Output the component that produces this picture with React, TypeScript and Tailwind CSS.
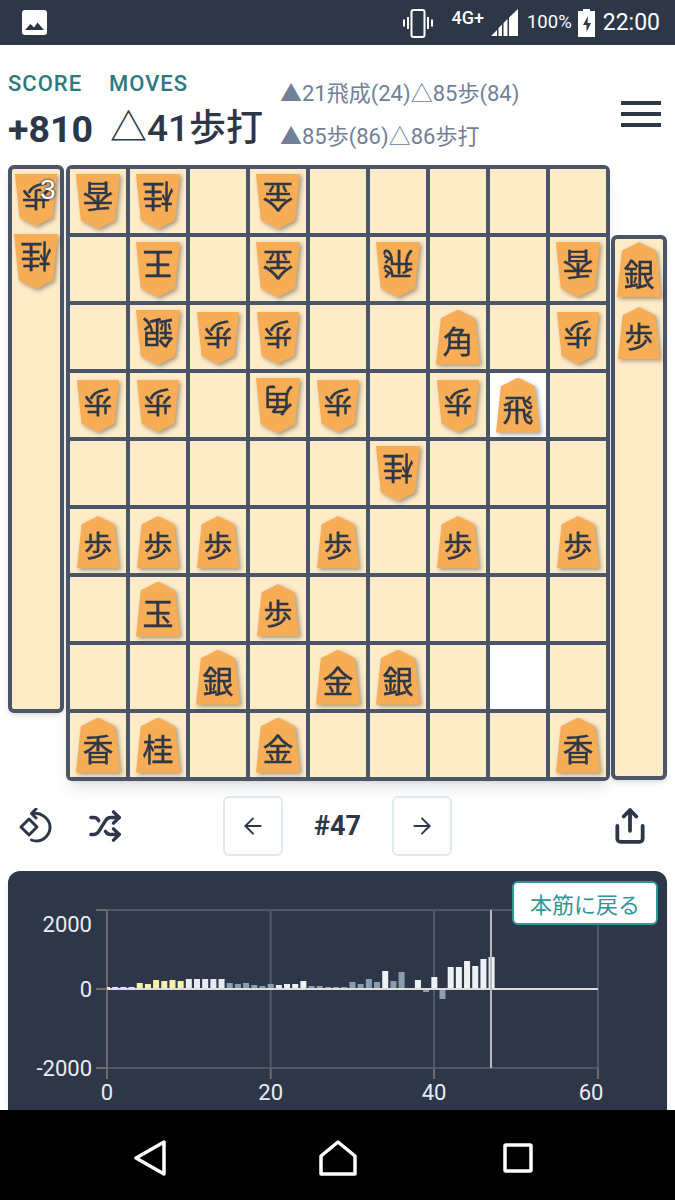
import { ArrowLeft, ArrowRight, Share, Shuffle } from "lucide-react"

type Cell = { k: string; opp?: boolean; hl?: boolean } | null

const o = (k: string): Cell => ({ k, opp: true })
const u = (k: string): Cell => ({ k })
const _ = null

const board: Cell[][] = [
  [o("香"), o("桂"), _, o("金"), _, _, _, _, _],
  [_, o("王"), _, o("金"), _, o("飛"), _, _, o("香")],
  [_, o("銀"), o("歩"), o("歩"), _, _, u("角"), _, o("歩")],
  [o("歩"), o("歩"), _, o("角"), o("歩"), _, o("歩"), { k: "飛", hl: true }, _],
  [_, _, _, _, _, o("桂"), _, _, _],
  [u("歩"), u("歩"), u("歩"), _, u("歩"), _, u("歩"), _, u("歩")],
  [_, u("玉"), _, u("歩"), _, _, _, _, _],
  [_, _, u("銀"), _, u("金"), u("銀"), _, { k: "", hl: true }, _],
  [u("香"), u("桂"), _, u("金"), _, _, _, _, u("香")],
]

// heights in px above the zero line, read off the graph
const bars = [
  2, 2, 2, 2, 6, 5, 9, 8, 9, 8, 10, 10, 10, 10, 10, 6, 5, 6, 4, 3, 5, 4, 5, 5, 8, 3, 3, 2, 2, 2, 7, 5, 10, 7, 18, 8,
  17, 1, 9, -3, 12, -10, 22, 22, 28, 23, 30, 32,
]

function barColor(i: number, h: number) {
  if (i < 10) return "#f8f3a6"
  if (h < 0) return "#8e9cb1"
  if (i < 15) return "#e6ebf1"
  if ((i >= 15 && i < 21) || (i >= 25 && i < 34) || i === 35 || i === 36 || i === 37) return "#8e9cb1"
  return "#edf2f7"
}

function Piece({ k, opp }: { k: string; opp?: boolean }) {
  const small = k === "歩"
  return (
    <div className={`drop-shadow-[2px_2px_2px_rgba(0,0,0,0.35)] ${small ? "mt-[2px]" : ""}`}>
      <div
        className={`flex items-center justify-center bg-[#f6ad55] text-[#2d3748] [clip-path:polygon(50%_0,89%_16%,100%_100%,0_100%,11%_16%)] ${
          small ? "h-[52px] w-[42px] text-[29px]" : "h-[55px] w-[44px] text-[31px]"
        } ${opp ? "rotate-180" : ""}`}
      >
        <span className="leading-none pt-[5px] [-webkit-text-stroke:0.4px_#2d3748]">{k}</span>
      </div>
    </div>
  )
}

function StatusBar() {
  return (
    <div className="flex h-[45px] items-center justify-between bg-[#2d3748] pl-[21px] pr-[15px] text-white font-['Roboto',sans-serif]">
      <svg width="26" height="26" viewBox="0 0 26 26">
        <rect x="1" y="0" width="25" height="25" rx="3" fill="#fff" />
        <path d="M4 20l5.500-6 3.500 3.500 3.500-5 6.500 7.500z" fill="#2d3748" />
      </svg>
      <div className="flex items-center">
        <svg width="30" height="30" viewBox="0 0 30 30" fill="none" stroke="#fff" strokeWidth="2">
          <rect x="8.500" y="2" width="13" height="27" rx="2" />
          <path d="M5 9v12M1 11.500v7M25 9v12M29 11.500v7" />
        </svg>
        <span className="ml-[18px] mb-[10px] text-[18px] font-medium leading-none">4G+</span>
        <svg className="ml-[7px]" width="27" height="27" viewBox="0 0 27 27" fill="#fff">
          <path d="M0 27l6-6v6zM7.500 27v-8l3.500-3.500V27zM12.500 27V14l4-4v17zM18 27V8.500L27 0v27z" />
        </svg>
        <span className="ml-[9px] text-[18.500px] leading-none">100%</span>
        <svg className="ml-[6px]" width="17" height="28" viewBox="0 0 17 28">
          <path d="M5 2V0h7v2h5v26H0V2z" fill="#fff" />
          <path d="M10 7l-5 9h3.500v7L13 14H9.500z" fill="#2d3748" />
        </svg>
        <span className="ml-[8px] text-[23px] font-normal leading-none">22:00</span>
      </div>
    </div>
  )
}

function Header() {
  return (
    <div className="flex h-[120px] items-start pl-2 pr-[14px] font-['Roboto','Noto_Sans_CJK_JP',sans-serif]">
      <div className="mt-[26px] w-[101px]">
        <div className="text-[22px] font-medium leading-[26px] tracking-[1px] text-[#2c7a7b]">SCORE</div>
        <div className="mt-[8px] text-[37.500px] font-bold leading-[48px] text-[#2d3748]">+810</div>
      </div>
      <div className="mt-[26px] w-[171px]">
        <div className="text-[22px] font-medium leading-[26px] tracking-[1px] text-[#2c7a7b]">MOVES</div>
        <div className="mt-[8px] ml-[1px] text-[37px] font-medium leading-[48px] text-[#2d3748] whitespace-nowrap">
          △41歩打
        </div>
      </div>
      <div className="mt-[27px] text-[22px] leading-[43px] text-[#718096] whitespace-nowrap">
        <div>▲21飛成(24)△85歩(84)</div>
        <div>▲85歩(86)△86歩打</div>
      </div>
      <div className="ml-auto mt-[56px] flex w-[40px] flex-col gap-[7px]">
        <div className="h-[4px] bg-[#2d3748]" />
        <div className="h-[4px] bg-[#2d3748]" />
        <div className="h-[4px] bg-[#2d3748]" />
      </div>
    </div>
  )
}

function Stand({ pieces, className }: { pieces: Cell[]; className: string }) {
  return (
    <div
      className={`relative flex w-[56px] flex-col items-center gap-2 rounded-md border-4 border-[#4a5568] bg-[#feebc8] pt-[3px] shadow-md ${className}`}
    >
      {pieces.map((p, i) => p && <Piece key={i} k={p.k} opp={p.opp} />)}
    </div>
  )
}

function Board() {
  return (
    <div className="grid grid-cols-[repeat(9,56px)] grid-rows-[repeat(9,64px)] gap-1 rounded-md bg-[#4a5568] p-1 shadow-lg">
      {board.flat().map((c, i) => (
        <div key={i} className={`flex items-center justify-center ${c?.hl ? "bg-white" : "bg-[#feebc8]"}`}>
          {c && c.k && <Piece k={c.k} opp={c.opp} />}
        </div>
      ))}
    </div>
  )
}

function Controls() {
  return (
    <div className="flex h-[90px] items-center pl-[18px] pr-[26px] text-[#2d3748]">
      <svg width="36" height="36" viewBox="0 0 36 36" fill="none" stroke="currentColor" strokeWidth="3" strokeLinejoin="round">
        <path d="M15 5.500c8-1 16 4.500 17 12.500 .7 8-6 15-13.500 15-2 0-3.500-.3-5-1" strokeLinecap="round" />
        <path d="M18 1l-4.500 4.500L18 10" strokeLinecap="round" />
        <path d="M3 19l8-8 8 8-8 8z" />
      </svg>
      <Shuffle className="ml-[34px]" size={34} strokeWidth={2.4} />
      <div className="ml-[101px] mr-auto flex items-center">
        <button className="flex h-[60px] w-[60px] items-center justify-center rounded-md border-2 border-[#e2e8f0]">
          <ArrowLeft size={26} strokeWidth={1.8} />
        </button>
        <span className="w-[109px] text-center font-['Roboto',sans-serif] text-[27px] font-bold">#47</span>
        <button className="flex h-[60px] w-[60px] items-center justify-center rounded-md border-2 border-[#e2e8f0]">
          <ArrowRight size={26} strokeWidth={1.8} />
        </button>
      </div>
      <Share size={38} strokeWidth={2.4} />
    </div>
  )
}

function Chart() {
  const X = (n: number) => 99 + n * 8.183
  const Z = 118
  return (
    <div className="relative mx-2 h-[400px] rounded-t-xl bg-[#2d3748] shadow-md">
      <svg width="659" height="240" viewBox="0 0 659 240" className="font-['Roboto',sans-serif]">
        {[39, 197].map((y) => (
          <line key={y} x1="99" x2="590" y1={y} y2={y} stroke="#4d5767" strokeWidth="2" />
        ))}
        {[99, 262.7, 426, 590].map((x) => (
          <line key={x} x1={x} x2={x} y1="39" y2="197" stroke="#4d5767" strokeWidth="2" />
        ))}
        <path d="M88 39h11M88 118h11M88 197h11M99 39v169M262.700 197v11M426 197v11M590 197v11" stroke="#6b6b6b" strokeWidth="2" fill="none" />
        {bars.map((h, i) => (
          <rect
            key={i}
            x={X(i) - 3 + (i === 0 ? 3 : 0)}
            y={h > 0 ? Z - h : Z}
            width={i === 0 ? 3 : 6}
            height={Math.abs(h)}
            fill={barColor(i, h)}
          />
        ))}
        <line x1="99" x2="590" y1={Z} y2={Z} stroke="#dcdcdc" strokeWidth="2" />
        <line x1="483" x2="483" y1="39" y2="197" stroke="#b9b9b9" strokeWidth="2" />
        <g fill="#e8ecf1" fontSize="22">
          <text x="84" y="61" textAnchor="end">2000</text>
          <text x="84" y="126" textAnchor="end">0</text>
          <text x="84" y="205" textAnchor="end">-2000</text>
          <text x="99" y="229" textAnchor="middle">0</text>
          <text x="262.700" y="229" textAnchor="middle">20</text>
          <text x="426" y="229" textAnchor="middle">40</text>
          <text x="583" y="229" textAnchor="middle">60</text>
        </g>
      </svg>
      <button className="absolute right-[9px] top-[10px] h-[44px] w-[146px] rounded-md border-2 border-[#319795] bg-white font-['Noto_Sans_CJK_JP',sans-serif] text-[22px] leading-none text-[#319795]">
        本筋に戻る
      </button>
    </div>
  )
}

function NavBar() {
  return (
    <div className="flex h-[90px] shrink-0 items-center bg-black pl-[134px] pt-[6px]">
      <svg width="32" height="36" viewBox="0 0 32 36" fill="none" stroke="#fff" strokeWidth="3.500" strokeLinejoin="round">
        <path d="M30 2v32L2 18z" />
      </svg>
      <svg className="ml-[153px]" width="38" height="36" viewBox="0 0 38 36" fill="none" stroke="#fff" strokeWidth="3.500" strokeLinejoin="round">
        <path d="M2 16L19 2l17 14v18H2z" />
      </svg>
      <svg className="ml-[146px]" width="30" height="30" viewBox="0 0 30 30" fill="none" stroke="#fff" strokeWidth="3.500" strokeLinejoin="round">
        <rect x="2" y="2" width="26" height="26" rx="1" />
      </svg>
    </div>
  )
}

export default function App() {
  return (
    <div className="flex h-[1200px] w-[675px] flex-col overflow-hidden bg-white font-['Noto_Sans_CJK_JP',sans-serif]">
      <StatusBar />
      <Header />
      <div className="flex items-start pl-2">
        <div className="relative">
          <Stand className="h-[548px]" pieces={[o("歩"), o("桂")]} />
          <span className="absolute left-[32px] top-[11px] font-['Liberation_Sans',sans-serif] text-[28px] leading-none text-white [text-shadow:0_0_3px_#2d3748,0_0_2px_#2d3748]">
            3
          </span>
        </div>
        <div className="ml-[2px]">
          <Board />
        </div>
        <Stand className="ml-[1px] mt-[70px] h-[545px]" pieces={[u("銀"), u("歩")]} />
      </div>
      <Controls />
      <div className="min-h-0 flex-1 overflow-hidden">
        <Chart />
      </div>
      <NavBar />
    </div>
  )
}
